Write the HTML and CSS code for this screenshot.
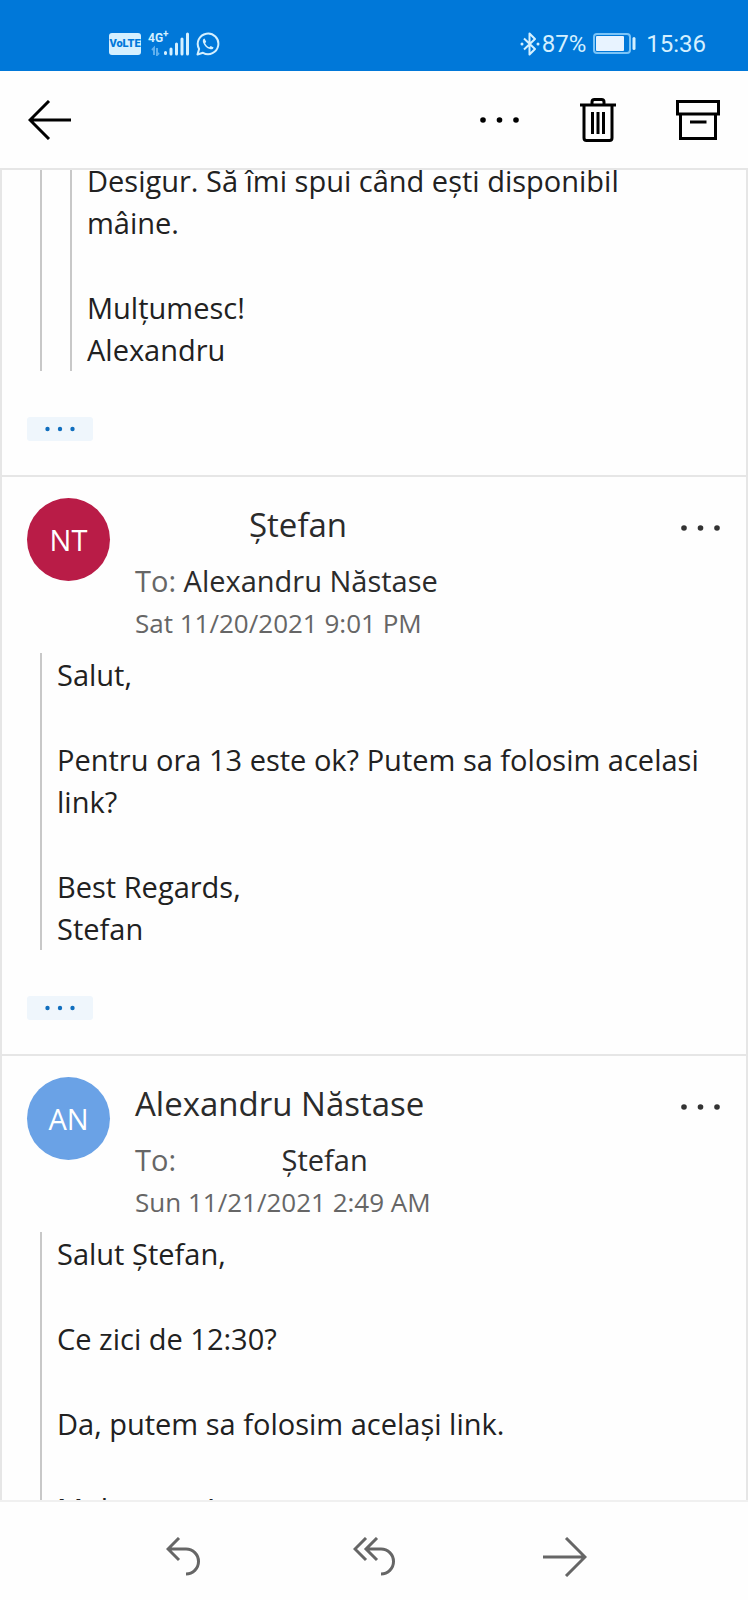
FILE: index.html
```html
<!DOCTYPE html>
<html lang="ro">
<head>
<meta charset="utf-8">
<meta name="viewport" content="width=device-width, initial-scale=1">
<title>Mail</title>
<link rel="stylesheet" href="styles.css">
</head>
<body>
<div class="status">
  <div class="status-left">
    <span class="volte">VoLTE</span>
    <span class="network">
      <span class="network-type">4G<sup>+</sup></span>
      <svg width="38" height="24" viewBox="0 0 38 24" aria-hidden="true">
        <path d="M3 23v-7l-2 2M6 16v7l2-2" class="data-arrows"/>
        <path d="M14.500 20.500v1M20 17v5M25.500 12v10M31 7v15M36.500 2v20" class="bars"/>
      </svg>
    </span>
    <svg width="24" height="24" viewBox="0 0 24 24" aria-hidden="true">
      <path d="M1.500 22.500l1.600-5.600a10.300 10.300 0 1 1 3.900 3.900z" class="line"/>
      <path d="M8.500 6.500c-1.600.6-2 2.200-1.400 3.900 1.200 3.200 3.600 5.600 6.800 6.700 1.700.6 3.300.1 3.700-1.700l-2.900-1.500-1.300 1.400c-2-.8-3.400-2.200-4.300-4.100l1.100-1.400z" class="solid"/>
    </svg>
  </div>
  <div class="status-right">
    <svg width="20" height="24" viewBox="0 0 20 24" aria-hidden="true">
      <path d="M4 6.500l11 10.500-5.500 5.500v-21L15 7 4 17.500" class="line"/>
      <circle cx="2" cy="12" r="1.500" class="solid"/><circle cx="18" cy="12" r="1.500" class="solid"/>
    </svg>
    <span>87%</span>
    <svg class="battery" width="43" height="21" viewBox="0 0 43 21" aria-hidden="true">
      <rect x="1" y="1" width="36" height="19" rx="3" class="case"/>
      <rect x="3" y="3" width="28" height="15" rx="1" class="charge"/>
      <path d="M41 5.500v10" class="cap"/>
    </svg>
    <span>15:36</span>
  </div>
</div>

<header class="toolbar">
  <button class="icon-button" aria-label="Back">
    <svg width="44" height="40" viewBox="0 0 44 40"><path d="M43 20H2M21 1L2 20l19 19" class="stroke"/></svg>
  </button>
  <div class="toolbar-actions">
    <button class="icon-button" aria-label="More">
      <svg width="40" height="6" viewBox="0 0 40 6"><circle cx="3" cy="3" r="2.800"/><circle cx="19.500" cy="3" r="2.800"/><circle cx="36" cy="3" r="2.800"/></svg>
    </button>
    <button class="icon-button" aria-label="Delete">
      <svg width="36" height="44" viewBox="0 0 36 44"><path d="M0 7h36M12 7V4q0-2.500 2.500-2.500h7Q24 1.500 24 4v3M4 7v33q0 2.500 2.500 2.500h23Q32 42.500 32 40V7M12.500 14v22M18 14v22M23.500 14v22" class="stroke"/></svg>
    </button>
    <button class="icon-button" aria-label="Archive">
      <svg width="44" height="40" viewBox="0 0 44 40"><path d="M1.500 1.500h41V14h-41zM4.500 14v24.500h35V14M14 22h16.500" class="stroke"/></svg>
    </button>
  </div>
</header>

<main class="viewport">
  <article class="message message-first">
    <blockquote class="quote"><blockquote class="quote">
      <p>Desigur. Să îmi spui când ești disponibil mâine.</p>
      <p>Mulțumesc!<br>Alexandru</p>
    </blockquote></blockquote>
    <button class="expand" aria-label="Show trimmed content">
      <svg width="30" height="6" viewBox="0 0 30 6"><circle cx="2.500" cy="3" r="2.200"/><circle cx="15" cy="3" r="2.200"/><circle cx="27.500" cy="3" r="2.200"/></svg>
    </button>
  </article>

  <article class="message">
    <header class="message-head">
      <div class="avatar avatar-red">NT</div>
      <div class="meta">
        <h2 class="sender"><span class="blank-sender"></span>Ștefan</h2>
        <div class="to"><span class="muted">To:</span> Alexandru Năstase</div>
        <time class="date">Sat 11/20/2021 9:01 PM</time>
      </div>
      <button class="icon-button more" aria-label="More actions">
        <svg width="40" height="6" viewBox="0 0 40 6"><circle cx="3" cy="3" r="2.800"/><circle cx="19.500" cy="3" r="2.800"/><circle cx="36" cy="3" r="2.800"/></svg>
      </button>
    </header>
    <blockquote class="quote">
      <p>Salut,</p>
      <p>Pentru ora 13 este ok? Putem sa folosim acelasi link?</p>
      <p>Best Regards,<br>Stefan</p>
    </blockquote>
    <button class="expand" aria-label="Show trimmed content">
      <svg width="30" height="6" viewBox="0 0 30 6"><circle cx="2.500" cy="3" r="2.200"/><circle cx="15" cy="3" r="2.200"/><circle cx="27.500" cy="3" r="2.200"/></svg>
    </button>
  </article>

  <article class="message">
    <header class="message-head">
      <div class="avatar avatar-blue">AN</div>
      <div class="meta">
        <h2 class="sender">Alexandru Năstase</h2>
        <div class="to"><span class="muted">To:</span> <span class="blank-to"></span>Ștefan</div>
        <time class="date">Sun 11/21/2021 2:49 AM</time>
      </div>
      <button class="icon-button more" aria-label="More actions">
        <svg width="40" height="6" viewBox="0 0 40 6"><circle cx="3" cy="3" r="2.800"/><circle cx="19.500" cy="3" r="2.800"/><circle cx="36" cy="3" r="2.800"/></svg>
      </button>
    </header>
    <blockquote class="quote">
      <p>Salut Ștefan,</p>
      <p>Ce zici de 12:30?</p>
      <p>Da, putem sa folosim același link.</p>
      <p>Mulțumesc!</p>
    </blockquote>
  </article>
</main>

<footer class="reply-bar">
  <button class="icon-button" aria-label="Reply">
    <svg width="34" height="40" viewBox="0 0 34 40"><path d="M13 1L2 12l11 11M2 12h18a12.500 12.500 0 0 1 0 25" class="stroke"/></svg>
  </button>
  <button class="icon-button" aria-label="Reply all">
    <svg width="42" height="40" viewBox="0 0 42 40"><path d="M13 1L2 12l11 11M24 1L13 12l11 11M13 12h15a12.500 12.500 0 0 1 0 25" class="stroke"/></svg>
  </button>
  <button class="icon-button" aria-label="Forward">
    <svg width="44" height="40" viewBox="0 0 44 40"><path d="M0 20h42M23 1l19 19-19 19" class="stroke"/></svg>
  </button>
</footer>
</body>
</html>
```

FILE: styles.css
```css
* { box-sizing: border-box; }

body {
  margin: 0;
  height: 100vh;
  display: flex;
  flex-direction: column;
  background: #fefefe;
  color: #212121;
  font-family: "Open Sans", "Noto Sans", sans-serif;
  font-size: 29px;
  line-height: 42px;
}

button { font: inherit; border: 0; padding: 0; background: none; color: inherit; cursor: pointer; }
svg { display: block; flex: none; }
h2, p, blockquote { margin: 0; font-weight: 400; }

.status {
  flex: none;
  height: 71px;
  padding: 16px 42px 0 109px;
  display: flex;
  justify-content: space-between;
  align-items: center;
  background: #0078d9;
  color: #d4f0ff;
  font: 24px/28px Roboto, sans-serif;
}
.status-left { display: flex; align-items: center; gap: 7px; }
.status-right { display: flex; align-items: center; gap: 2px; }
.status-right .battery { margin: 0 8px 0 5px; }
.status .line { fill: none; stroke: currentColor; stroke-width: 2; stroke-linejoin: round; }
.status .solid { fill: currentColor; }
.status .case { fill: none; stroke: #7cc4f7; stroke-width: 2; }
.status .charge { fill: #e8f3ff; }
.status .cap { fill: none; stroke: currentColor; stroke-width: 3; stroke-linecap: round; }
.bars { fill: none; stroke: currentColor; stroke-width: 3; stroke-linecap: round; }
.data-arrows { fill: none; stroke: #5fb0ee; stroke-width: 2; }

.volte {
  width: 32px;
  border-radius: 3px;
  background: #d4f0ff;
  color: #0078d9;
  font-size: 11px;
  line-height: 22px;
  font-weight: 900;
  text-align: center;
}
.network { display: grid; }
.network > * { grid-area: 1 / 1; }
.network svg { justify-self: end; margin-left: 3px; }
.network-type { font-size: 12px; line-height: 12px; font-weight: 700; }
.network-type sup { font-size: 10px; line-height: 0; }

.toolbar {
  flex: none;
  height: 99px;
  padding: 0 28px;
  display: flex;
  justify-content: space-between;
  align-items: center;
  border-bottom: 2px solid #e6e6e6;
  color: #000;
}
.toolbar-actions { display: flex; align-items: center; gap: 60px; }
.icon-button { display: flex; align-items: center; justify-content: center; }
.icon-button svg { fill: currentColor; }
.icon-button .stroke { fill: none; stroke: currentColor; stroke-width: 3; }

.viewport {
  flex: 1;
  min-height: 0;
  overflow: hidden;
  border: solid #e6e6e6;
  border-width: 0 2px;
}

.message { padding: 0 25px 34px; border-top: 2px solid #e6e6e6; }
.message-first { margin-top: -11px; border-top: 0; }
.message-head { display: flex; padding-top: 21px; }

.avatar {
  flex: none;
  width: 83px;
  height: 83px;
  border-radius: 50%;
  color: #fff;
  line-height: 84px;
  text-align: center;
}
.avatar-red { background: #b91c47; }
.avatar-blue { background: #6aa2e6; }

.meta { flex: 1; min-width: 0; padding-left: 25px; }
.sender { font-size: 33px; line-height: 54px; color: #2b2b2b; }
.to { line-height: 58px; color: #2b2b2b; }
.date { display: block; font-size: 26px; line-height: 26px; padding-bottom: 17px; color: #666; }
.muted { color: #666; }
.blank-sender { display: inline-block; width: 114px; }
.blank-to { display: inline-block; width: 98px; }
.more { align-self: flex-start; height: 60px; color: #333; }

.quote { margin-left: 13px; padding: 1px 12px 0 15px; border-left: 2px solid #c8c8c8; }
.quote .quote { padding-top: 0; margin-left: 13px; }
.quote p + p { margin-top: 43px; }

.expand {
  display: flex;
  align-items: center;
  justify-content: center;
  width: 66px;
  height: 24px;
  margin-top: 46px;
  border-radius: 3px;
  background: #eff6fc;
  color: #106ebe;
}
.expand svg { fill: currentColor; }

.reply-bar {
  flex: none;
  height: 100px;
  padding: 12px 88px 0;
  display: grid;
  grid-template-columns: repeat(3, 1fr);
  border-top: 2px solid #f0f0f0;
  color: #666;
}
```
